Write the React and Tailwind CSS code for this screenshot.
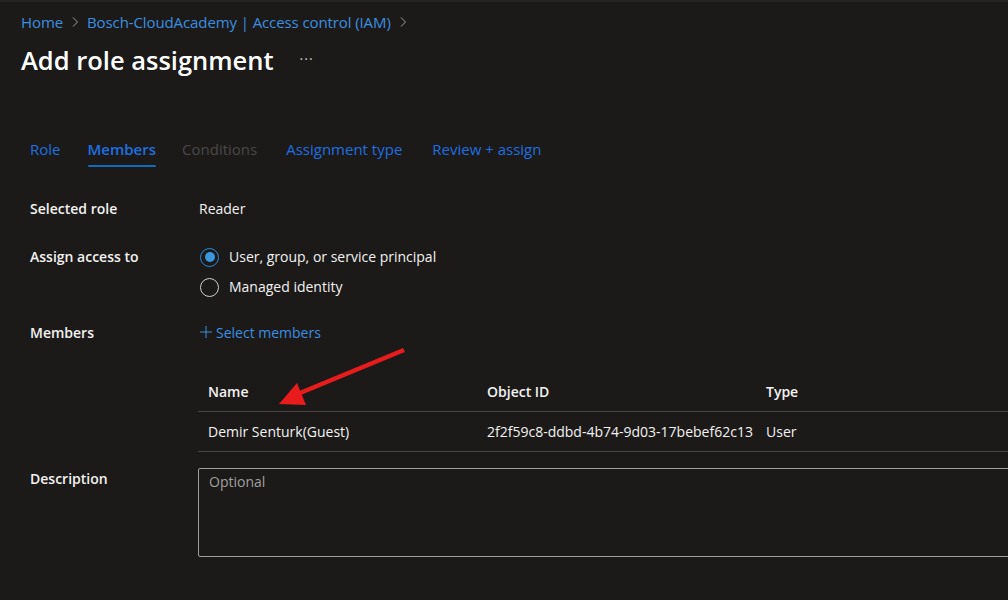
import React from "react";

const font = { fontFamily: '"Segoe UI", "Open Sans", "Noto Sans", sans-serif' };

export default function App() {
  return (
    <div className="relative w-[1008px] h-[600px] overflow-hidden bg-[#1b1a19] text-[#f3f2f1] border-t-2 border-[#252423]" style={font}>
      <div className="pl-[21px] pt-[10px] flex items-center text-[15px] text-[#3b8fe0] leading-[20px] tracking-[-0.1px]">
        <span>Home</span>
        <span className="mx-[7px] text-[#8a8886]">
          <svg width="10" height="12" viewBox="0 0 10 12"><path d="M3 1.5 L7.5 6 L3 10.5" stroke="#a19f9d" strokeWidth="1" fill="none" /></svg>
        </span>
        <span>Bosch-CloudAcademy | Access control (IAM)</span>
        <span className="ml-[7px]">
          <svg width="10" height="12" viewBox="0 0 10 12"><path d="M3 1.5 L7.5 6 L3 10.5" stroke="#a19f9d" strokeWidth="1" fill="none" /></svg>
        </span>
      </div>
      <div className="pl-[21px] mt-[10px] flex items-center h-[36px]">
        <h1 className="text-[25.5px] font-semibold text-white leading-[36px]">Add role assignment</h1>
        <span className="ml-[26px] text-[#c8c6c4] text-[14px] tracking-[1px] -mt-[4px]">···</span>
      </div>

      <div className="pl-[30px] mt-[58px] flex items-start text-[15px] leading-[20px]">
        <div className="pt-[3px] text-[#1f6fe0] mr-[27px]">Role</div>
        <div className="flex flex-col mr-[26px]">
          <div className="pt-[3px] text-[#1f6fe0] font-semibold">Members</div>
          <div className="mt-[6px] h-[2px] bg-[#0f6cbd] rounded-sm" />
        </div>
        <div className="pt-[3px] text-[#4a4847] mr-[29px]">Conditions</div>
        <div className="pt-[3px] text-[#1f6fe0] mr-[30px]">Assignment type</div>
        <div className="pt-[3px] text-[#1f6fe0]">Review + assign</div>
      </div>

      <div className="mt-[32px] text-[14px] leading-[20px]">
        <div className="flex pl-[30px]">
          <div className="w-[169px] shrink-0 font-semibold">Selected role</div>
          <div>Reader</div>
        </div>
        <div className="flex pl-[30px] mt-[28px]">
          <div className="w-[169px] shrink-0 font-semibold">Assign access to</div>
          <div className="flex flex-col gap-[10px]">
            <div className="flex items-center">
              <span className="w-[19px] h-[19px] rounded-full border-[1.5px] border-[#2b88d8] flex items-center justify-center ml-[1px]">
                <span className="w-[10px] h-[10px] rounded-full bg-[#3a96dd]" />
              </span>
              <span className="ml-[10px]">User, group, or service principal</span>
            </div>
            <div className="flex items-center">
              <span className="w-[19px] h-[19px] rounded-full border-[1.5px] border-[#d2d0ce] ml-[1px]" />
              <span className="ml-[10px]">Managed identity</span>
            </div>
          </div>
        </div>
        <div className="flex pl-[30px] mt-[26px]">
          <div className="w-[169px] shrink-0 font-semibold">Members</div>
          <div className="flex items-center text-[#3b8fe0]">
            <svg width="14" height="14" viewBox="0 0 14 14" className="mr-[3px] -mt-[2px]"><path d="M7 1 V13 M1 7 H13" stroke="#3b8fe0" strokeWidth="1" /></svg>
            <span>Select members</span>
          </div>
        </div>

        <div className="ml-[198px] mt-[29px]">
          <div className="flex h-[40px] items-center font-semibold border-b border-[#484644]">
            <div className="w-[289px] shrink-0 pl-[10px]">Name</div>
            <div className="w-[279px] shrink-0">Object ID</div>
            <div>Type</div>
          </div>
          <div className="flex h-[40px] items-center border-b border-[#484644]">
            <div className="w-[289px] shrink-0 pl-[10px]">Demir Senturk(Guest)</div>
            <div className="w-[279px] shrink-0 whitespace-nowrap">2f2f59c8-ddbd-4b74-9d03-17bebef62c13</div>
            <div>User</div>
          </div>
        </div>

        <div className="flex pl-[30px] mt-[16px]">
          <div className="w-[168px] shrink-0 font-semibold pt-[1px]">Description</div>
          <div className="w-[830px] shrink-0 h-[89px] border border-[#a19f9d] rounded-[2px] px-[10px] pt-[3px] text-[#a19f9d]">Optional</div>
        </div>
      </div>

      <svg className="absolute left-0 top-0 pointer-events-none" width="1008" height="600">
        <line x1="404" y1="348" x2="300" y2="391" stroke="#e81c1c" strokeWidth="4.5" />
        <polygon points="279,402 297,381 306,403" fill="#e81c1c" />
      </svg>
    </div>
  );
}
